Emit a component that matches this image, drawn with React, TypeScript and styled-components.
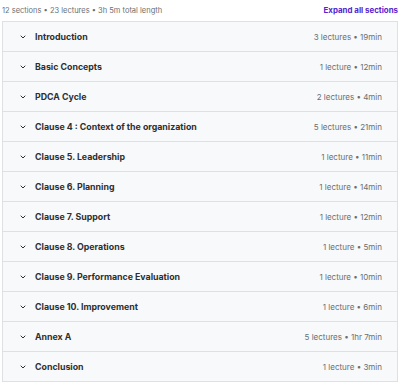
import React from 'react'
import styled, { createGlobalStyle } from 'styled-components'

const sections = [
  { title: 'Introduction', meta: '3 lectures • 19min' },
  { title: 'Basic Concepts', meta: '1 lecture • 12min' },
  { title: 'PDCA Cycle', meta: '2 lectures • 4min' },
  { title: 'Clause 4 : Context of the organization', meta: '5 lectures • 21min' },
  { title: 'Clause 5. Leadership', meta: '1 lecture • 11min' },
  { title: 'Clause 6. Planning', meta: '1 lecture • 14min' },
  { title: 'Clause 7. Support', meta: '1 lecture • 12min' },
  { title: 'Clause 8. Operations', meta: '1 lecture • 5min' },
  { title: 'Clause 9. Performance Evaluation', meta: '1 lecture • 10min' },
  { title: 'Clause 10. Improvement', meta: '1 lecture • 6min' },
  { title: 'Annex A', meta: '5 lectures • 1hr 7min' },
  { title: 'Conclusion', meta: '1 lecture • 3min' },
]

const GlobalStyle = createGlobalStyle`
  body {
    margin: 0;
    background: #fff;
    font-family: Inter, "Noto Sans", sans-serif;
    color: #2d2f31;
  }
`

const Chevron = () => (
  <svg width="8" height="8" viewBox="0 0 8 8" fill="none">
    <path d="M2 3 L4 5 L6 3" stroke="#2d2f31" strokeWidth="1" strokeLinecap="round" strokeLinejoin="round" />
  </svg>
)

export default function App() {
  return (
    <>
      <GlobalStyle />
      <Wrapper>
        <Header>
          <Summary>12 sections • 23 lectures • 3h 5m total length</Summary>
          <ExpandButton>Expand all sections</ExpandButton>
        </Header>
        <List>
          {sections.map((s) => (
            <Row key={s.title}>
              <Left>
                <Chevron />
                <Title>{s.title}</Title>
              </Left>
              <Meta>{s.meta}</Meta>
            </Row>
          ))}
        </List>
      </Wrapper>
    </>
  )
}

const Wrapper = styled.div`
  width: 396px;
  padding: 0 2px;
`

const Header = styled.div`
  display: flex;
  align-items: center;
  justify-content: space-between;
  height: 21px;
  padding-bottom: 1px;
  box-sizing: border-box;
`

const Summary = styled.span`
  font-size: 7.5px;
  color: #6a6f73;
`

const ExpandButton = styled.span`
  font-size: 7.9px;
  font-weight: 700;
  color: #5624d0;
`

const List = styled.div`
  border: 1px solid #dde1e4;
  border-bottom: none;
`

const Row = styled.div`
  display: flex;
  align-items: center;
  justify-content: space-between;
  height: 29px;
  padding: 0 15px 0 16px;
  background: #f7f9fa;
  border-bottom: 1px solid #dde1e4;
`

const Left = styled.div`
  display: flex;
  align-items: center;
  gap: 8px;
`

const Title = styled.span`
  font-size: 8.8px;
  font-weight: 700;
  color: #2d2f31;
`

const Meta = styled.span`
  font-size: 8px;
  color: #6a6f73;
`
